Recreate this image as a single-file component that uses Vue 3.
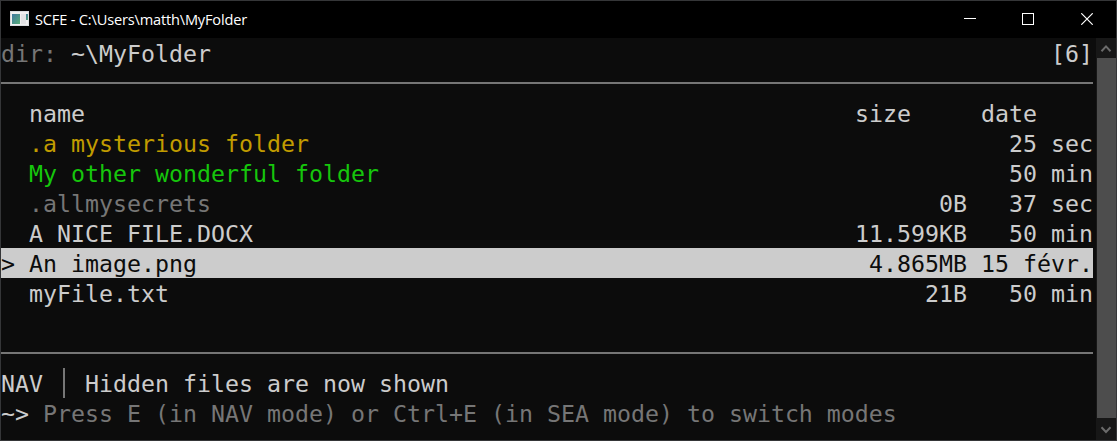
<script setup>
const files = [
  { name: '.a mysterious folder', size: '', date: '25 sec', tone: 'hidden-folder' },
  { name: 'My other wonderful folder', size: '', date: '50 min', tone: 'folder' },
  { name: '.allmysecrets', size: '0B', date: '37 sec', tone: 'dim' },
  { name: 'A NICE FILE.DOCX', size: '11.599KB', date: '50 min', tone: '' },
  { name: 'An image.png', size: '4.865MB', date: '15 févr.', tone: '', selected: true },
  { name: 'myFile.txt', size: '21B', date: '50 min', tone: '' }
]
</script>

<template>
  <div class="window">
    <header class="titlebar">
      <svg class="app-icon" width="19" height="16" viewBox="0 0 19 16">
        <defs>
          <linearGradient id="pane" x1="0" y1="0" x2="1" y2="1">
            <stop offset="0" stop-color="#3f78a0" />
            <stop offset="1" stop-color="#58ad78" />
          </linearGradient>
        </defs>
        <rect width="19" height="15" fill="#d9dcdf" />
        <rect x="1" y="1" width="17" height="13" fill="#f0f0f0" />
        <rect x="2" y="3" width="8" height="10" fill="url(#pane)" />
        <rect x="11" y="3" width="5" height="10" fill="#e2e2e4" />
        <rect x="16" y="3" width="2" height="6" fill="url(#pane)" />
      </svg>
      <span class="title">SCFE - C:\Users\matth\MyFolder</span>
      <div class="controls">
        <svg width="12" height="12" viewBox="0 0 12 12"><path d="M0 5.5H12" /></svg>
        <svg width="12" height="12" viewBox="0 0 12 12"><rect x=".5" y=".5" width="11" height="11" /></svg>
        <svg width="12" height="12" viewBox="0 0 12 12"><path d="M.3 .3L11.7 11.7M11.7 .3L.3 11.7" stroke-width="1.2" /></svg>
      </div>
    </header>

    <div class="body">
      <main class="terminal">
        <div class="line split">
          <span><span class="dim">dir:</span> ~\MyFolder</span>
          <span>[6]</span>
        </div>
        <div class="rule"></div>
        <div class="line row">
          <span></span><span>name</span><span>size</span><span>date</span>
        </div>
        <div v-for="f in files" :key="f.name" class="line row" :class="{ selected: f.selected }">
          <span>{{ f.selected ? '>' : '' }}</span>
          <span :class="f.tone">{{ f.name }}</span>
          <span class="right">{{ f.size }}</span>
          <span class="right">{{ f.date }}</span>
        </div>
        <div class="line"></div>
        <div class="rule"></div>
        <div class="line status">
          <span>NAV</span><i class="bar"></i><span>Hidden files are now shown</span>
        </div>
        <div class="line">~&gt; <span class="dim">Press E (in NAV mode) or Ctrl+E (in SEA mode) to switch modes</span></div>
      </main>
      <aside class="scrollbar">
        <svg width="20" height="20" viewBox="0 0 20 20"><path d="M5.5 13.2L10 8.4L14.5 13.2" /></svg>
        <div class="thumb"></div>
        <svg width="20" height="22" viewBox="0 0 20 22"><path d="M5.5 9.2L10 14L14.5 9.2" /></svg>
      </aside>
    </div>
  </div>
</template>

<style>
body {
  margin: 0;
  background: #0c0c0c;
}
</style>

<style scoped>
.window {
  box-sizing: border-box;
  width: 1117px;
  height: 441px;
  border: 1px solid #353638;
  background: #0c0c0c;
  overflow: hidden;
}
.titlebar {
  box-sizing: border-box;
  display: flex;
  align-items: center;
  height: 37px;
  padding: 0 23px 1px 9px;
  background: #000;
  color: #fff;
}
.app-icon {
  margin-right: 6px;
}
.title {
  font: 14.6px/20px "Open Sans", "Noto Sans", sans-serif;
  letter-spacing: -0.18px;
  white-space: nowrap;
}
.controls {
  display: flex;
  gap: 47px;
  margin-left: auto;
}
.controls svg {
  fill: none;
  stroke: #fff;
  stroke-width: 1;
}
.controls svg:first-child {
  margin-right: -1px;
}
.body {
  display: flex;
  justify-content: space-between;
  height: 402px;
}
.terminal {
  width: 1092px;
  color: #ccc;
  font: 23.253px/30px "DejaVu Sans Mono", monospace;
  white-space: pre;
}
.line {
  box-sizing: border-box;
  height: 30px;
  padding-top: 1px;
}
.split {
  display: flex;
  justify-content: space-between;
}
.row {
  display: grid;
  grid-template-columns: 28px 826px 112px 112px;
}
.row > :last-child {
  margin-left: 14px;
  margin-right: -14px;
}
.right {
  text-align: right;
}
.selected {
  background: #ccc;
  color: #0c0c0c;
}
.rule {
  box-sizing: border-box;
  height: 30px;
  padding: 14px 0;
  background: #767676;
  background-clip: content-box;
}
.status {
  display: flex;
}
.bar {
  width: 2px;
  height: 30px;
  margin: -1px 20px 0;
  background: #767676;
}
.dim {
  color: #767676;
}
.folder {
  color: #16c60c;
}
.hidden-folder {
  color: #c19c00;
}
.scrollbar {
  display: flex;
  flex-direction: column;
  width: 20px;
  background: #171717;
}
.scrollbar svg {
  flex: none;
  fill: none;
  stroke: #6b6b6b;
  stroke-width: 2;
}
.thumb {
  flex: 1;
  margin: 0 0 0 1px;
  background: #4d4d4d;
}
</style>
